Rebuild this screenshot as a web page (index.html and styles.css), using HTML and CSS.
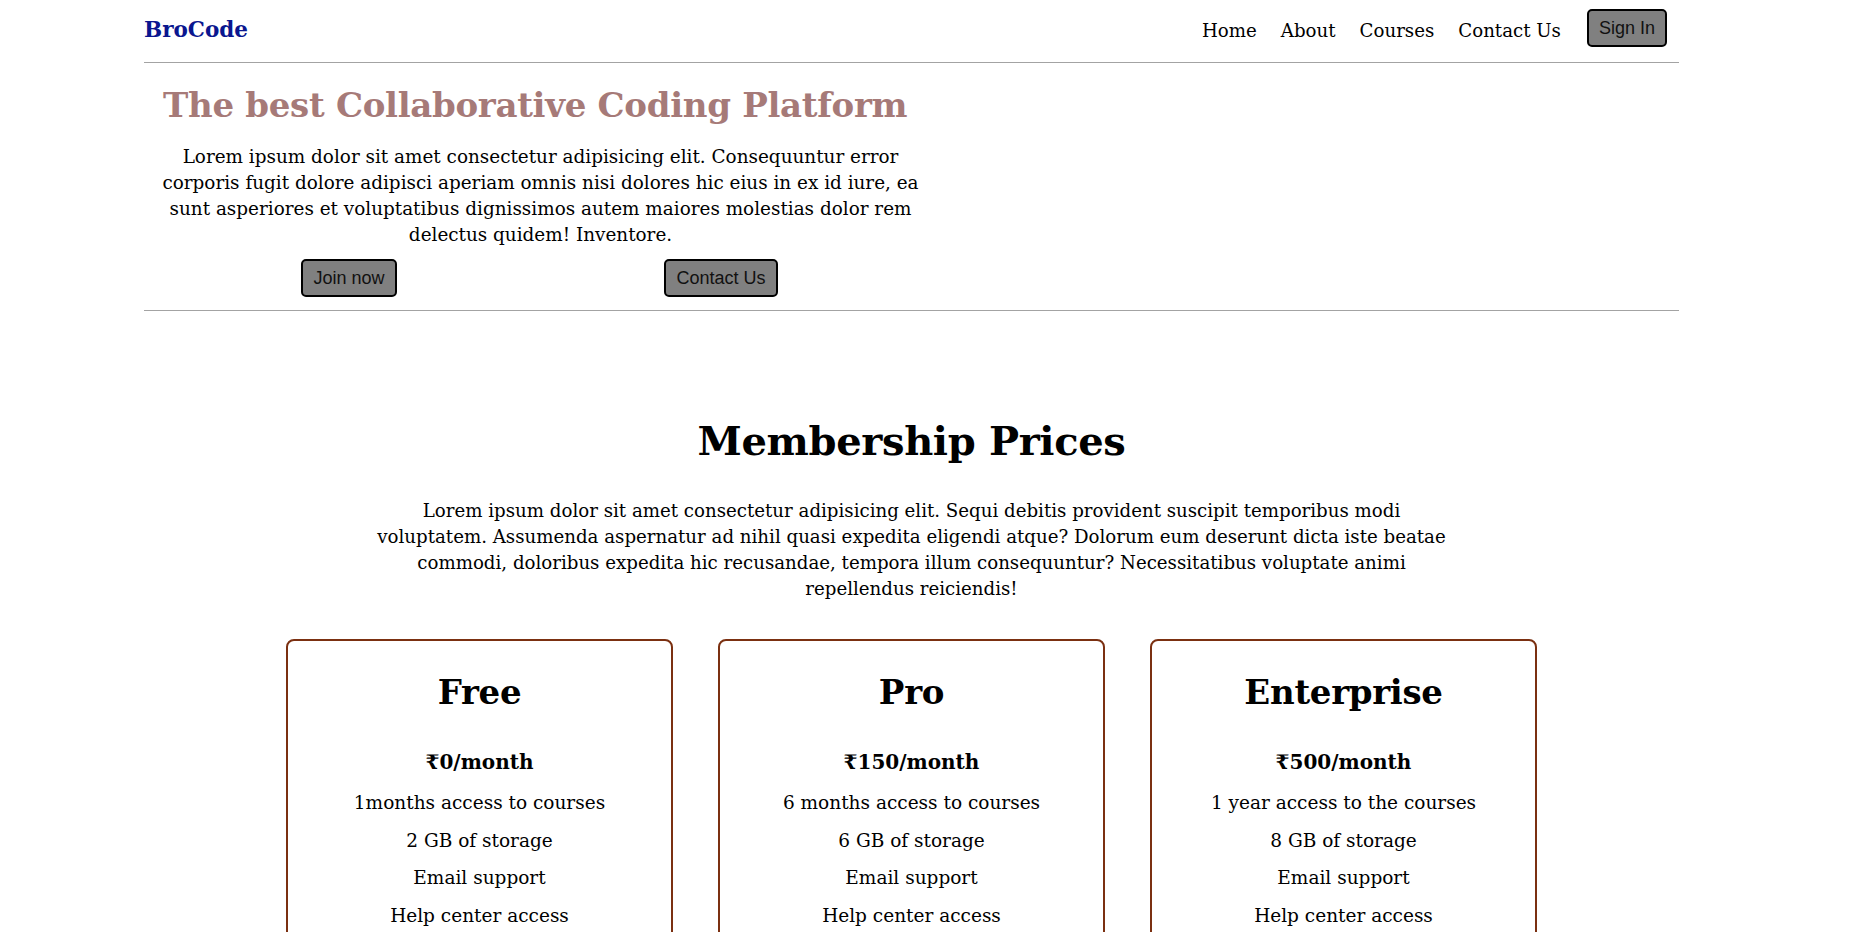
FILE: index.html
```html
<!DOCTYPE html>
<html lang="en">
<head>
<meta charset="utf-8">
<title>BroCode</title>
<link rel="stylesheet" href="styles.css">
</head>
<body>
<div class="container">
  <header class="nav">
    <div class="logo">BroCode</div>
    <nav class="menu">
      <a href="#">Home</a>
      <a href="#">About</a>
      <a href="#">Courses</a>
      <a href="#">Contact Us</a>
      <button class="btn btn-sign">Sign In</button>
    </nav>
  </header>
  <hr class="rule">
  <section class="hero">
    <div class="hero-left">
      <h1 class="hero-title">The best Collaborative Coding Platform</h1>
      <p class="hero-text">Lorem ipsum dolor sit amet consectetur adipisicing elit. Consequuntur error corporis fugit dolore adipisci aperiam omnis nisi dolores hic eius in ex id iure, ea sunt asperiores et voluptatibus dignissimos autem maiores molestias dolor rem delectus quidem! Inventore.</p>
      <div class="hero-btns">
        <div class="hero-btn-cell"><button class="btn">Join now</button></div>
        <div class="hero-btn-cell"><button class="btn">Contact Us</button></div>
      </div>
    </div>
  </section>
  <hr class="rule">
  <section class="pricing">
    <h2 class="pricing-title">Membership Prices</h2>
    <p class="pricing-text">Lorem ipsum dolor sit amet consectetur adipisicing elit. Sequi debitis provident suscipit temporibus modi voluptatem. Assumenda aspernatur ad nihil quasi expedita eligendi atque? Dolorum eum deserunt dicta iste beatae commodi, doloribus expedita hic recusandae, tempora illum consequuntur? Necessitatibus voluptate animi repellendus reiciendis!</p>
    <div class="cards">
      <div class="card">
        <h3 class="card-title">Free</h3>
        <h4 class="card-price">₹0/month</h4>
        <p class="card-item">1months access to courses</p>
        <p class="card-item">2 GB of storage</p>
        <p class="card-item">Email support</p>
        <p class="card-item">Help center access</p>
      </div>
      <div class="card">
        <h3 class="card-title">Pro</h3>
        <h4 class="card-price">₹150/month</h4>
        <p class="card-item">6 months access to courses</p>
        <p class="card-item">6 GB of storage</p>
        <p class="card-item">Email support</p>
        <p class="card-item">Help center access</p>
      </div>
      <div class="card">
        <h3 class="card-title">Enterprise</h3>
        <h4 class="card-price">₹500/month</h4>
        <p class="card-item">1 year access to the courses</p>
        <p class="card-item">8 GB of storage</p>
        <p class="card-item">Email support</p>
        <p class="card-item">Help center access</p>
      </div>
    </div>
  </section>
</div>
</body>
</html>
```

FILE: styles.css
```css
* { box-sizing: border-box; }

body {
  margin: 0;
  font-family: "DejaVu Serif", "Liberation Serif", serif;
  color: #000;
  background: #fff;
}

.container {
  margin: 0 170px 0 144px;
}

.nav {
  height: 56px;
  display: flex;
  align-items: center;
  justify-content: space-between;
}

.logo {
  font-size: 21.5px;
  font-weight: bold;
  color: #0a168f;
  padding-top: 3px;
}

.menu {
  display: flex;
  align-items: center;
  gap: 24px;
  padding-right: 12px;
}

.menu a {
  color: #000;
  text-decoration: none;
  font-size: 18.2px;
  padding-top: 4px;
}

.btn {
  font-family: "Liberation Sans", Arial, sans-serif;
  font-size: 18px;
  color: #111;
  background: #808080;
  border: 2px solid #000;
  border-radius: 5px;
  height: 38px;
  padding: 0 10px;
}

.btn-sign {
  margin-left: 2px;
}

.rule {
  margin: 6px 0 0;
  border: 0;
  border-top: 1px solid #a3a3a3;
  height: 0;
}

.hero {
  padding: 18px 0 7px 19px;
}

.hero-left {
  width: 755px;
  text-align: center;
}

.hero-title {
  margin: 0;
  font-size: 34px;
  letter-spacing: -0.3px;
  font-weight: bold;
  color: #a67a78;
  line-height: 48px;
  text-align: left;
  white-space: nowrap;
}

.hero-text {
  margin: 15px -8px 0;
  font-size: 18.4px;
  line-height: 26px;
}

.hero-btns {
  display: grid;
  grid-template-columns: 1fr 1fr;
  width: 744px;
  margin-top: 11px;
}

.hero-btn-cell {
  display: flex;
  justify-content: center;
}

.pricing {
  text-align: center;
}

.pricing-title {
  margin: 0;
  padding-top: 100px;
  font-size: 40px;
  letter-spacing: -0.35px;
  font-weight: bold;
  line-height: 60px;
}

.pricing-text {
  margin: 26.5px auto 0;
  width: 1078px;
  font-size: 18.2px;
  line-height: 26px;
}

.cards {
  display: flex;
  justify-content: center;
  gap: 45px;
  margin-top: 37.5px;
}

.card {
  width: 387px;
  border: 2px solid #7b3011;
  border-radius: 8px;
  padding: 27px 10px 30px;
}

.card-title {
  margin: 0;
  font-size: 34px;
  letter-spacing: -0.3px;
  font-weight: bold;
  line-height: 48px;
}

.card-price {
  margin: 32px 0 2px;
  font-size: 20px;
  font-weight: bold;
  line-height: 28px;
}

.card-item {
  margin: 14.7px 0 0;
  font-size: 18.5px;
  line-height: 23px;
}

.card-price + .card-item {
  margin-top: 15px;
}
```
